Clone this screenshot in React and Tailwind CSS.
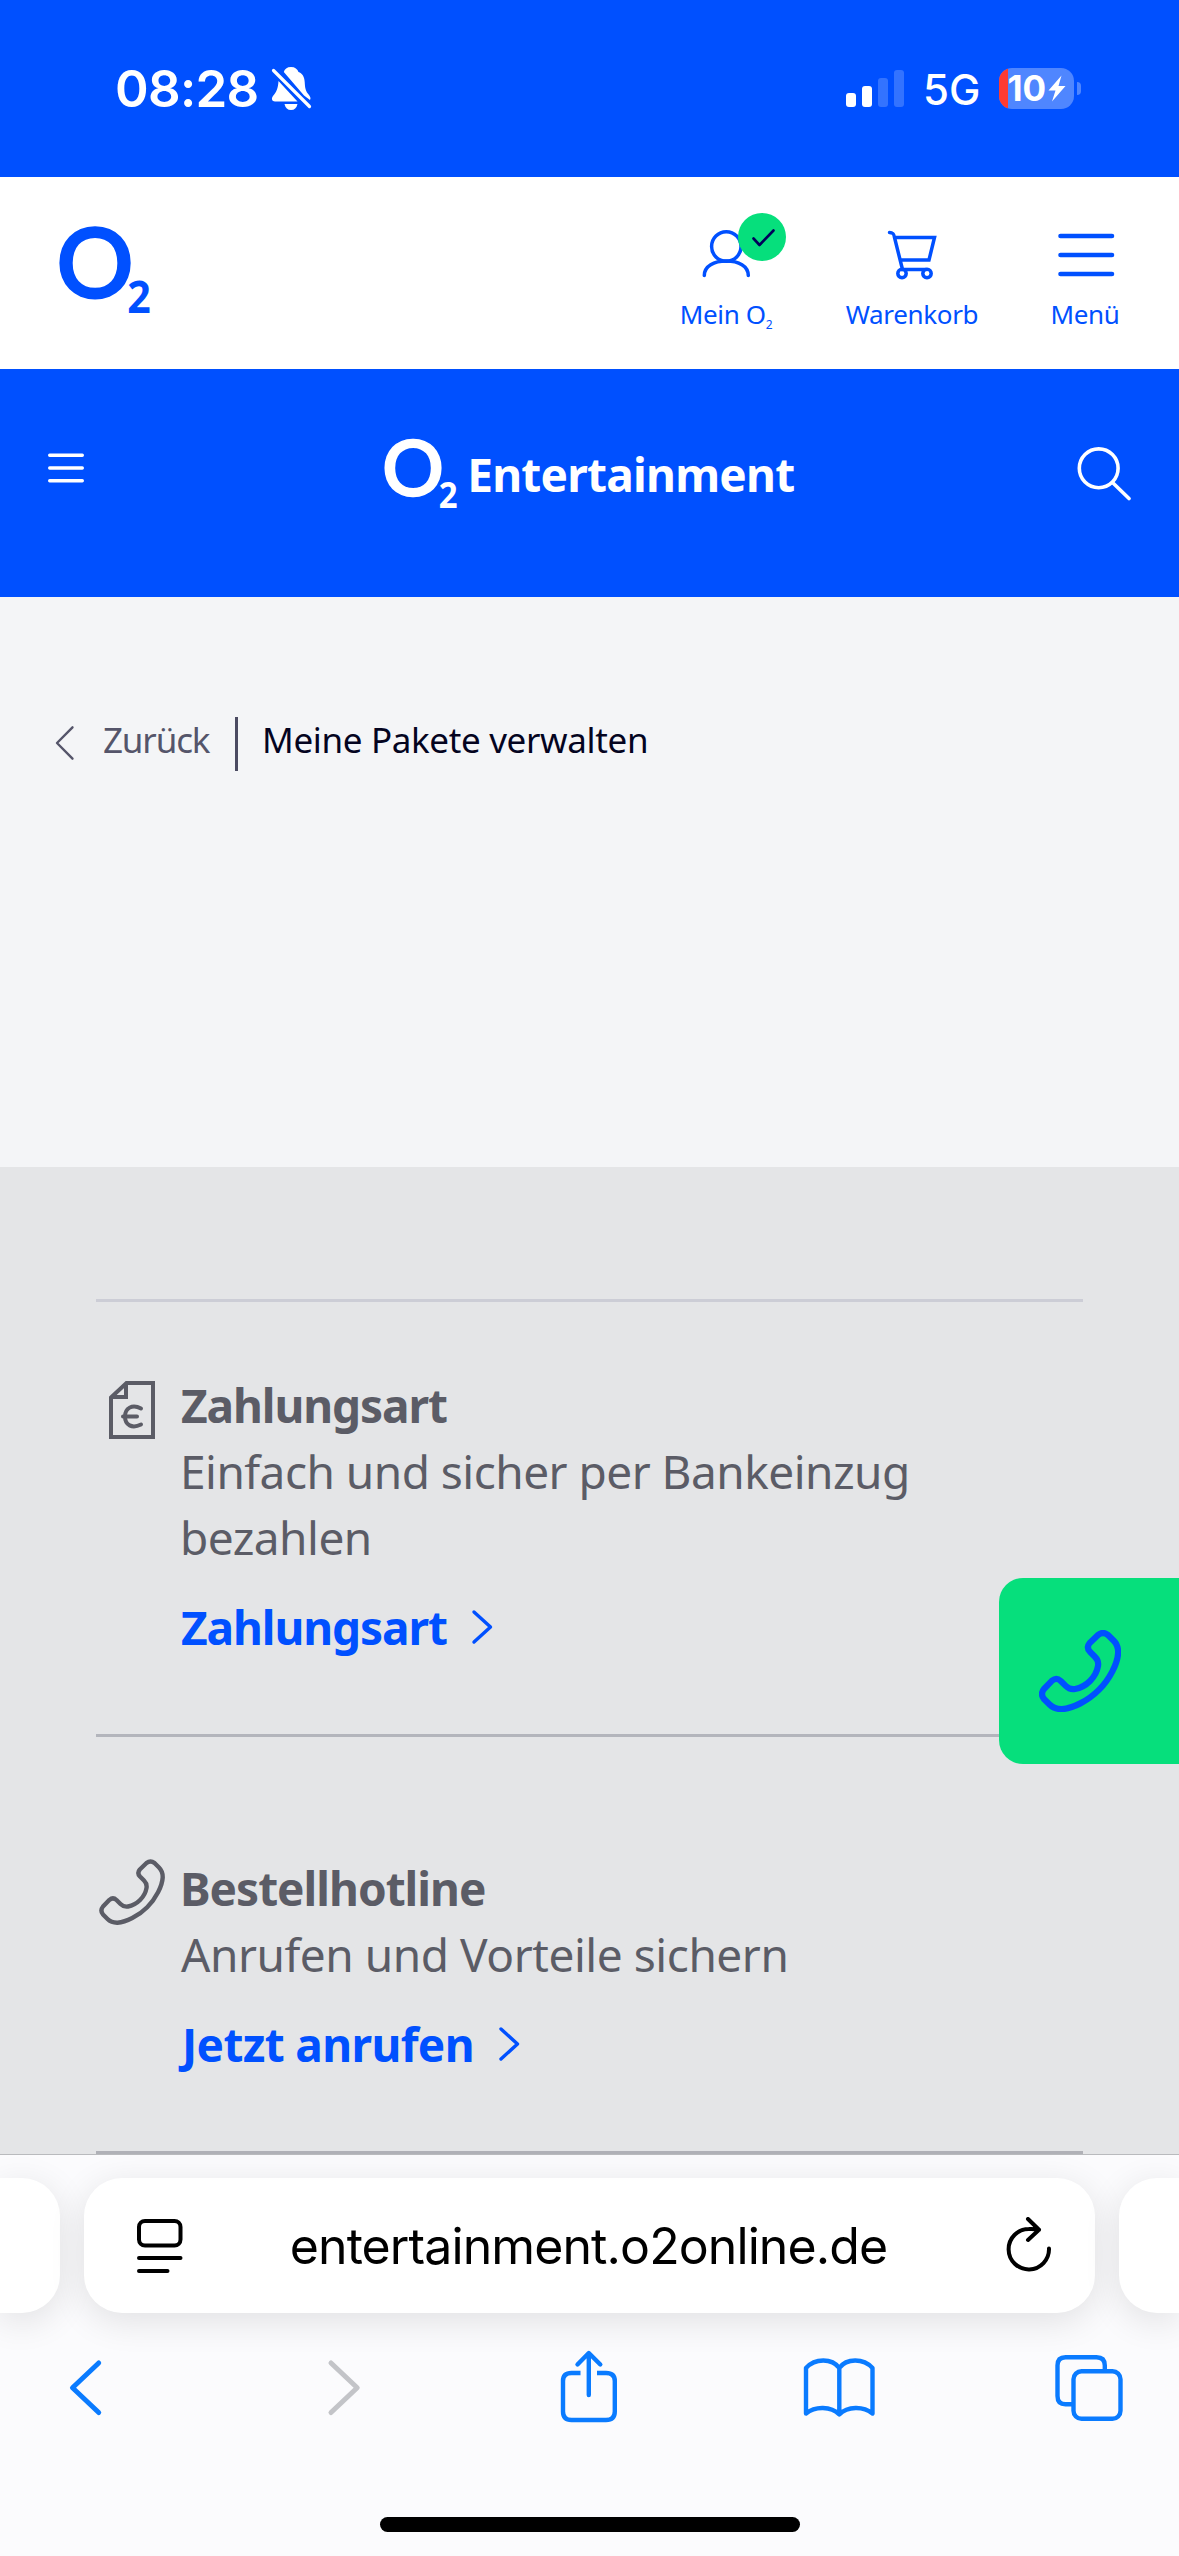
import React from "react";

function Icon({ box, className = "", sw = 4, children }) {
  return (
    <svg
      viewBox={box}
      fill="none"
      stroke="currentColor"
      strokeWidth={sw}
      strokeLinecap="round"
      strokeLinejoin="round"
      className={`block shrink-0 ${className}`}
    >
      {children}
    </svg>
  );
}

function Logo({ className }) {
  return (
    <svg viewBox="60 220 92 98" fill="currentColor" className={`block shrink-0 overflow-visible ${className}`}>
      <text x="56.2" y="297.7" fontSize="96.5" fontWeight="600" stroke="currentColor" strokeWidth="1.8" className="font-['Lato',sans-serif]">O</text>
      <text x="127.2" y="313" fontSize="44" fontWeight="700" textLength="23.5" lengthAdjust="spacingAndGlyphs" className="font-['Noto_Sans',sans-serif]">2</text>
    </svg>
  );
}

function PhoneIcon({ className, sw }) {
  return (
    <Icon box="0 0 66 66" sw={sw} className={className}>
      <path d="M4 47.5L10.5 40.8Q14 37.8 17.5 41L21.5 45C24 47.5 26 48 29 47.5C38 46 46 38 47.5 29C48 26 47.5 24 45 21.5L41 17.5Q37.8 14 40.8 10.5L47.5 4Q51.5 .8 55.5 4L60 8.5C63 11.5 63.8 14.5 63.7 18.5C63.2 27 57 39.5 48.2 48.2C39.5 57 27 63.2 18.5 63.7C14.5 63.8 11.5 63 8.5 60L4 55.5Q.8 51.5 4 47.5Z" />
    </Icon>
  );
}

function InvoiceIcon() {
  return (
    <Icon box="99 1376 66 66" sw={4} className="h-[66px] w-[66px]">
      <g strokeLinejoin="miter" strokeLinecap="butt">
        <path d="M111 1397.5L126.5 1383H153V1437H111Z" />
        <path d="M126 1383V1397H111" />
      </g>
      <path d="M141 1408.5C132 1403.5 125 1408.500 125 1416.500C125 1425 132 1429 141 1424.500M123 1416.500H137" />
    </Icon>
  );
}

function StatusBar() {
  return (
    <div className="flex h-[177px] items-center justify-between bg-[#0050ff] pl-[115px] pr-[98px] font-['Inter',sans-serif] text-white">
      <div className="flex items-center">
        <span className="text-[51px] font-semibold leading-none tracking-[-0.7px]">08:28</span>
        <Icon box="268 63 48 52" sw={0} className="ml-2.5 h-[52px] w-12">
          <g fill="currentColor" stroke="none">
            <path d="M291 67C287 67 284.500 69 283.800 72L304 95.500L310 100C311 98.500 310.500 97 309 95C305.500 91 305 88 304.700 82C304.500 76.500 302 73 298.500 72C297.500 69 295 67 291 67Z" />
            <path d="M278.500 81L297.500 101.500H275C272 101.500 271 98.500 273 96C276.500 92 278 88.500 278.500 81Z" />
            <path d="M284.500 104H297.500C296.500 108 294.500 110 291 110C287.500 110 285.500 108 284.500 104Z" />
          </g>
          <path d="M273.500 70.500L309.500 106.500" strokeWidth="3.200" />
        </Icon>
      </div>
      <div className="flex items-center">
        <div className="flex h-[37px] items-end gap-1.5">
          <span className="h-3.5 w-2.5 rounded-[3px] bg-white" />
          <span className="h-[21px] w-2.5 rounded-[3px] bg-white" />
          <span className="h-[29px] w-2.5 rounded-[3px] bg-white/20" />
          <span className="h-[37px] w-2.5 rounded-[3px] bg-white/20" />
        </div>
        <span className="ml-[19px] mt-[3px] w-[55px] text-[42px] font-medium leading-none">5G</span>
        <div className="ml-[21px] flex h-[41px] w-[75px] items-center overflow-hidden rounded-[13px] bg-[#4f86ff]">
          <span className="h-full w-[8.5px] bg-[#ff3b30]" />
          <span className="text-[35px] font-bold leading-none">10</span>
          <Icon box="1049 75 18 27" sw={0} className="ml-0.5 h-[27px] w-[18px]">
            <path fill="currentColor" stroke="none" d="M1062.500 75.500L1049.500 90.500H1056.500L1053 101.500L1066.500 86H1059.500Z" />
          </Icon>
        </div>
        <span className="ml-[3px] h-[13px] w-1 rounded-r-full bg-[#4f86ff]" />
      </div>
    </div>
  );
}

function NavItem({ icon, width, children }) {
  return (
    <div className={`flex flex-col items-center ${width}`}>
      {icon}
      <span className="mt-1.5 whitespace-nowrap text-[26px] leading-9 tracking-[-0.35px]">{children}</span>
    </div>
  );
}

function SiteHeader() {
  return (
    <header className="flex h-48 items-start justify-between bg-white pl-[60px] pr-[60px] pt-[33px] text-[#0050ff]">
      <Logo className="mt-2.5 h-[98px] w-[92px]" />
      <nav className="flex gap-[72px]">
        <NavItem
          width="w-[94px]"
          icon={
            <Icon box="679 210 94 80" sw={3.5} className="h-20 w-[94px]">
              <circle cx="726.300" cy="246.500" r="14.700" />
              <path d="M704.300 275.500C704.300 266 714 261 726.300 261S748.300 266 748.300 275.500" />
            </Icon>
          }
        >
          Mein O<span className="relative top-[5px] text-[12px]">2</span>
        </NavItem>
        <NavItem
          width="w-[134px]"
          icon={
            <Icon box="872 210 80 80" sw={3.5} className="h-20 w-20">
              <path d="M889.500 232.500C893 232.500 894 233.500 894.500 237.500L902.500 269.500H926M895 237.500H934.500L929 260H900.500" strokeLinejoin="miter" />
              <circle cx="902" cy="273.500" r="4.200" />
              <circle cx="927" cy="273.500" r="4.200" />
            </Icon>
          }
        >
          Warenkorb
        </NavItem>
        <NavItem
          width="w-[68px]"
          icon={
            <Icon box="1051 210 68 80" sw={4.6} className="h-20 w-[68px]">
              <path d="M1060.500 236H1112M1060.500 255H1112M1060.500 274H1112" />
            </Icon>
          }
        >
          Menü
        </NavItem>
      </nav>
      <span className="absolute left-[738px] top-[213px] grid size-12 place-items-center rounded-full bg-[#06df7c] text-[#00005a]">
        <Icon box="738 213 48 48" sw={2.6} className="size-12">
          <path d="M753.500 238.500L759.500 245L773.500 230.500" />
        </Icon>
      </span>
    </header>
  );
}

function EntertainmentBar() {
  return (
    <div className="grid h-[228px] grid-cols-[1fr_auto_1fr] items-start bg-[#0050ff] px-12 pt-[65px] text-white">
      <Icon box="48 434 36 68" sw={3.4} className="h-[68px] w-9">
        <path d="M49.700 455.300H82.300M49.700 468H82.300M49.700 480.700H82.300" />
      </Icon>
      <div className="flex items-start gap-[9px]">
        <Logo className="h-[78.4px] w-[73.6px]" />
        <span className="mt-[10px] text-[46px] font-bold leading-[60px] tracking-[-0.75px]">Entertainment</span>
      </div>
      <Icon box="1077 434 54 68" sw={3.6} className="h-[68px] w-[54px] justify-self-end">
        <circle cx="1098.700" cy="468.300" r="19.400" />
        <path d="M1112.500 482.500L1129 498.500" />
      </Icon>
    </div>
  );
}

function Breadcrumb() {
  return (
    <div className="h-[570px] bg-[#f4f5f7] pl-[55px] pt-[120px]">
      <div className="flex h-[54px] items-center text-[35px]">
        <Icon box="55 716.5 20 54" sw={2.4} className="h-[54px] w-5 text-[#55556a]">
          <path d="M72.500 726.800L57 742.500L72.500 758.200" />
        </Icon>
        <span className="ml-[28px] w-[132px] pb-[8px] leading-[54px] tracking-[-1.15px] text-[#55556a]">Zurück</span>
        <span className="h-[54px] w-[3px] bg-[#4b4b62]" />
        <span className="ml-[24px] pb-[8px] leading-[54px] tracking-[-0.35px] text-[#04041f]">Meine Pakete verwalten</span>
      </div>
    </div>
  );
}

function InfoCard({ icon, title, text, link, titleClass, textClass, linkClass, className }) {
  return (
    <article className={`flex pb-[74px] ${className}`}>
      <div className="w-[85px] shrink-0 pl-[3px] pt-1 text-[#5b5c66]">{icon}</div>
      <div className="text-[46px] leading-[66px] text-[#5b5c66]">
        <h2 className={`font-bold ${titleClass}`}>{title}</h2>
        <p className={`w-[780px] ${textClass}`}>{text}</p>
        <a className="mt-6 flex items-start font-bold text-[#0050ff]">
          <span className={linkClass}>{link}</span>
          <Icon box="0 0 22 36" sw={3.4} className="ml-[24px] mt-[15px] h-9 w-[22px]">
            <path d="M3 3L19.500 18L3 33" />
          </Icon>
        </a>
      </div>
    </article>
  );
}

function Services() {
  return (
    <section className="h-[987px] bg-[#e4e5e7] px-24 pt-[132px]">
      <div className="h-[3px] w-[987px] bg-[#cccdd6]" />
      <InfoCard
        className="pt-[70px]"
        icon={<InvoiceIcon />}
        title="Zahlungsart"
        titleClass="tracking-[-1.1px]"
        text="Einfach und sicher per Bankeinzug bezahlen"
        textClass="-ml-px tracking-[-0.52px]"
        link="Zahlungsart"
        linkClass="tracking-[-1.1px]"
      />
      <div className="h-[3px] w-[987px] bg-[#b3b5bc]" />
      <InfoCard
        className="pt-[118px]"
        icon={<PhoneIcon sw={4.4} className="size-[66px]" />}
        title="Bestellhotline"
        titleClass="-ml-px tracking-[-1px]"
        text="Anrufen und Vorteile sichern"
        textClass="tracking-[-0.45px]"
        link="Jetzt anrufen"
        linkClass="pl-px tracking-[-0.65px]"
      />
      <div className="h-[3px] w-[987px] bg-[#b0b1b7]" />
    </section>
  );
}

function BrowserBar() {
  return (
    <footer className="h-[402px] border-t border-[#b9babd] bg-[#fbfbfd] pt-[23px]">
      <div className="flex h-[135px] gap-6">
        <div className="w-[60px] shrink-0 rounded-r-[38px] bg-white shadow-[0_8px_36px_rgba(0,0,0,0.11)]" />
        <div className="flex flex-1 items-center justify-between rounded-[38px] bg-white pl-[51px] pr-10 text-black shadow-[0_8px_36px_rgba(0,0,0,0.11)]">
          <Icon box="135 2217 49 58" sw={4} className="h-[58px] w-[49px]">
            <rect x="139" y="2221" width="41.500" height="24.500" rx="6" />
            <path d="M139 2258H180.500M139 2271H167.500" />
          </Icon>
          <span className="-translate-x-[6px] font-['Inter',sans-serif] text-[50px] leading-none tracking-[-0.9px]">entertainment.o2online.de</span>
          <Icon box="1005 2216.500 50 58" sw={4} className="h-[58px] w-[50px]">
            <path d="M1049 2248A20.200 20.200 0 1 1 1028.800 2228.500C1032.500 2228.300 1036 2228.600 1039 2229.300M1028 2218.500L1039 2229.300L1028 2239.500" />
          </Icon>
        </div>
        <div className="w-[60px] shrink-0 rounded-l-[38px] bg-white shadow-[0_8px_36px_rgba(0,0,0,0.11)]" />
      </div>
      <div className="mt-[32px] flex justify-between pl-[46px] pr-[50.5px] text-[#0a7bff]">
        <Icon box="47 2345 80 86" sw={5} className="h-[86px] w-20">
          <path d="M99.700 2363L73.500 2387.700L99.700 2412.500" />
        </Icon>
        <Icon box="296.5 2345 80 86" sw={5} className="h-[86px] w-20 text-[#c3c4c8]">
          <path d="M330.500 2363L356.700 2387.700L330.500 2412.500" />
        </Icon>
        <Icon box="547.5 2345 80 86" sw={4.4} className="h-[86px] w-20">
          <path d="M581 2373H572Q563.500 2373 563.500 2381V2411.500Q563.500 2420 572 2420H606.500Q615.300 2420 615.300 2411.500V2381Q615.300 2373 606.500 2373H597.500" strokeLinecap="butt" />
          <path d="M589.300 2395V2353.500M578 2364.500L589.300 2353L600.800 2364.500" />
        </Icon>
        <Icon box="798 2345 80 86" sw={4.4} className="h-[86px] w-20">
          <path d="M839.300 2368C832 2358 815 2358 806 2368V2413.500C815 2406 831 2406 839.300 2414.500C847.500 2406 863.500 2406 872.500 2413.500V2368C863.500 2358 846.500 2358 839.300 2368ZM839.300 2368V2414" />
        </Icon>
        <Icon box="1048.5 2345 80 86" sw={4.4} className="h-[86px] w-20">
          <rect x="1073" y="2371.300" width="47" height="47.500" rx="8" />
          <path d="M1072 2404.300H1065Q1057 2404.300 1057 2396V2365.500Q1057 2357.300 1065 2357.300H1096Q1104.300 2357.300 1104.300 2365.500V2370" strokeLinecap="butt" />
        </Icon>
      </div>
      <div className="mx-auto mt-[86px] h-[15px] w-[420px] rounded-full bg-black" />
    </footer>
  );
}

export default function App() {
  return (
    <main className="relative flex h-[2556px] w-[1179px] flex-col overflow-hidden font-['Noto_Sans',sans-serif]">
      <StatusBar />
      <SiteHeader />
      <EntertainmentBar />
      <Breadcrumb />
      <Services />
      <BrowserBar />
      <button className="absolute right-0 top-[1578px] h-[186px] w-[180px] rounded-l-[24px] bg-[#06df7c] pl-10 text-[#0050ff]">
        <PhoneIcon sw={5} className="size-[82px]" />
      </button>
    </main>
  );
}
